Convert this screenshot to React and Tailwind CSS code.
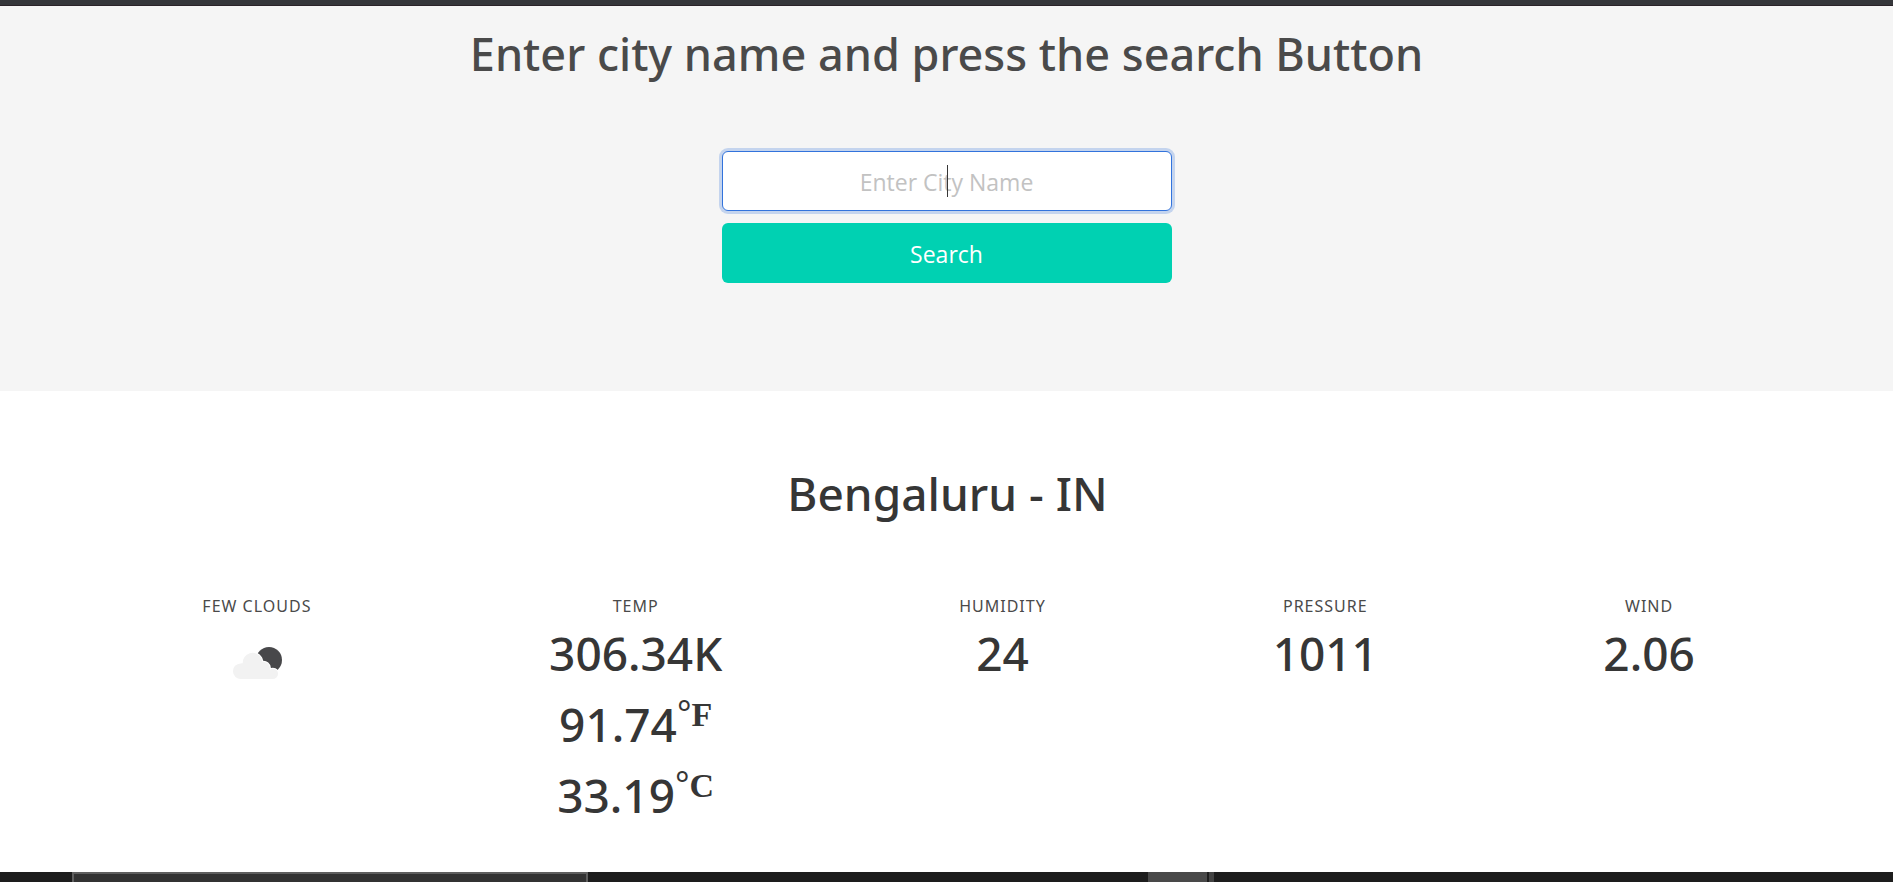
const display = "leading-[54px] font-medium font-['Noto_Sans','Open_Sans',sans-serif]";
const strong = display + " text-[46px] text-[#363636]";

function Item({ label, children }) {
  return (
    <div className="text-center">
      <p className="text-[16px] leading-6 font-normal uppercase tracking-[1px] text-[#4a4a4a] font-['Noto_Sans','Open_Sans',sans-serif]">{label}</p>
      {children}
    </div>
  );
}

function Unit({ letter }) {
  return (
    <sup className="relative -top-4 align-baseline text-[34px] leading-none">
      <span className="font-['Open_Sans',sans-serif] font-normal">°</span>
      <span className="font-['Liberation_Serif',serif] font-bold">{letter}</span>
    </sup>
  );
}

function NightCloud() {
  return (
    <svg className="mx-auto mt-[15px] block" width="60" height="60" viewBox="0 0 60 60" role="img" aria-label="few clouds">
      <circle cx="42" cy="27" r="13" fill="#48484a" />
      <path
        d="M14 46a7.800 7.800 0 0 1-.5-15.600q1.200-.3 2.300-.1a9.800 9.800 0 0 1 18.300-5.500q1 1.800 1.200 4a6.600 6.600 0 0 1 7.700 6.400q0 .9-.2 1.700a5 5 0 0 1 8.200 3.800a5.300 5.300 0 0 1-5.300 5.300z"
        fill="#f2f2f2"
        stroke="#fff"
        strokeWidth="2"
        paintOrder="stroke"
      />
    </svg>
  );
}

export default function App() {
  return (
    <div className="flex min-h-screen flex-col bg-white font-['Open_Sans','Noto_Sans',sans-serif]">
      <div className="h-[6px] border-b border-[#2a2228] bg-[#35363a]" />
      <header className="flex flex-col items-center bg-[#f5f5f5] pt-[21px] pb-[108px]">
        <h1 className={display + " text-[45px] text-[#4a4a4a]"}>Enter city name and press the search Button</h1>
        <form className="mt-[70px] flex w-[450px] flex-col gap-3" onSubmit={(e) => e.preventDefault()}>
          <div className="relative">
            <input
              type="text"
              aria-label="City name"
              placeholder="Enter City Name"
              autoFocus
              className="block h-[60px] w-full rounded-[6px] border border-[#3273dc] bg-white pt-[2px] text-center text-[23px] font-normal text-[#363636] caret-transparent shadow-[0_0_0_3px_rgba(50,115,220,0.25)] outline-none placeholder:text-[#c2c2c2]"
            />
            <span className="pointer-events-none absolute top-[14px] left-1/2 h-8 w-px bg-[#363636]" />
          </div>
          <button type="submit" className="h-[60px] rounded-[6px] bg-[#00d1b2] pt-[2px] text-[23px] text-white">Search</button>
        </form>
      </header>
      <main className="grow pr-[81px] pl-[83px] pt-[75px]">
        <h2 className={"text-center " + strong}>Bengaluru - IN</h2>
        <div className="mt-[74px] grid grid-cols-[348fr_410fr_324fr_322fr_326fr] items-start">
          <Item label="few clouds"><NightCloud /></Item>
          <Item label="Temp">
            <div className="mt-2 flex flex-col gap-[17px]">
              <p className={strong}>306.34K</p>
              <p className={strong}>91.74<Unit letter="F" /></p>
              <p className={strong}>33.19<Unit letter="C" /></p>
            </div>
          </Item>
          <Item label="Humidity"><p className={"mt-2 " + strong}>24</p></Item>
          <Item label="Pressure"><p className={"mt-2 " + strong}>1011</p></Item>
          <Item label="Wind"><p className={"mt-2 " + strong}>2.06</p></Item>
        </div>
      </main>
      <footer className="flex h-[10px] bg-[#1d1d1d]">
        <div className="ml-[72px] w-[516px] border-x-2 border-t-2 border-[#5f5f5f] bg-[#333]" />
        <div className="ml-[560px] w-[59px] bg-[#494949]" />
        <div className="ml-[2px] w-[5px] bg-[#434343]" />
      </footer>
    </div>
  );
}
